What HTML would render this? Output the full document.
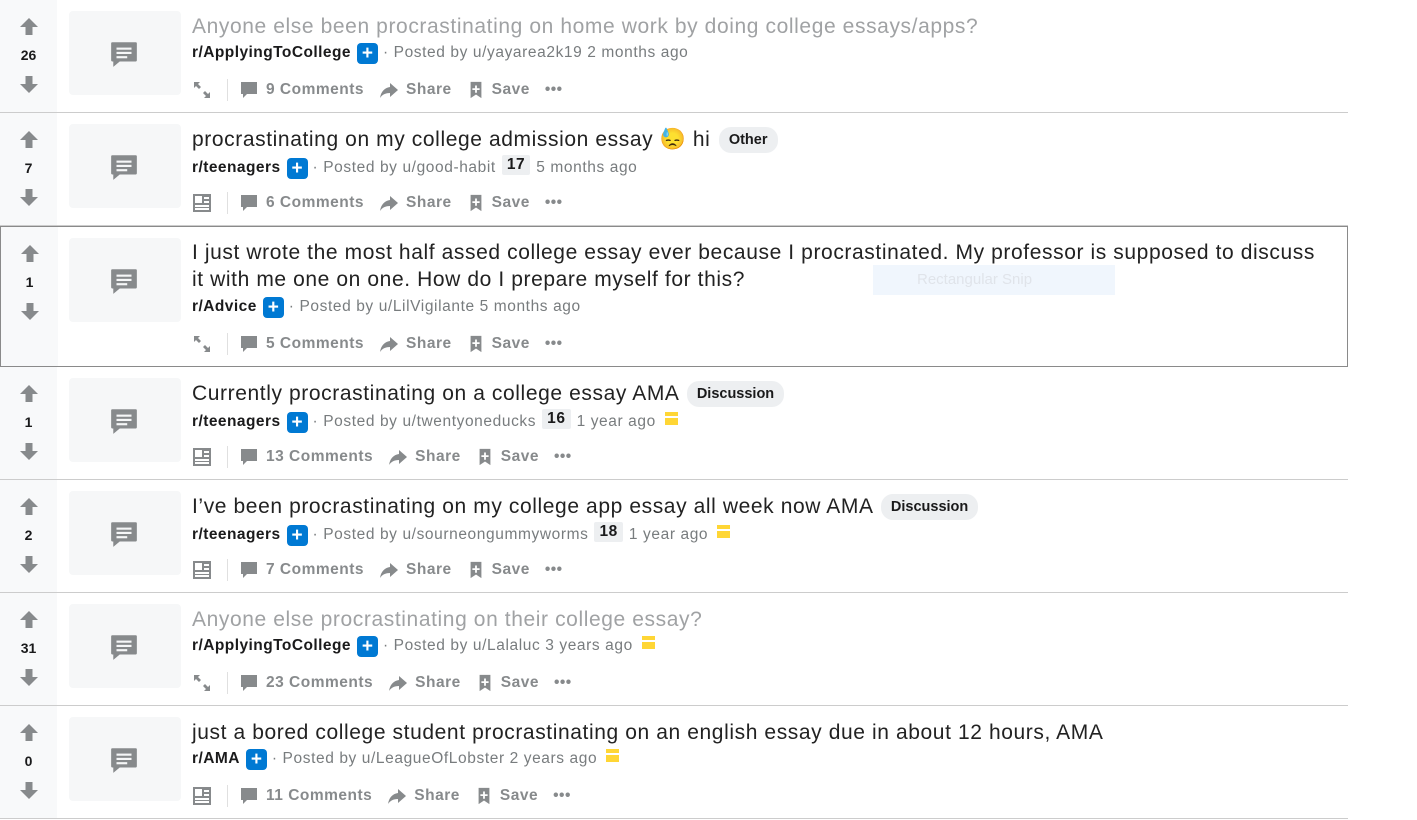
<!DOCTYPE html>
<html><head><meta charset="utf-8">
<style>
*{margin:0;padding:0;box-sizing:border-box}
body{width:1417px;height:820px;background:#fff;font-family:"Liberation Sans",sans-serif;position:relative;overflow:hidden}
.row{position:absolute;left:0;width:1348px;border-bottom:1px solid #ccc;background:#fff}
.row.sel{border:1px solid #8a8a8a}
.vote{position:absolute;left:0;top:0;bottom:0;width:57px;background:#f8f9fa}
.vote svg{position:absolute;left:19px}
.num{position:absolute;left:0;width:57px;text-align:center;font-weight:bold;font-size:14px;color:#1a1a1b}
.thumb{position:absolute;left:69px;width:112px;height:84px;background:#f6f7f8;border-radius:4px}
.thumb svg{position:absolute;left:40px;top:28px}
.title{position:absolute;left:192px;font-size:21px;color:#222;line-height:27px;letter-spacing:0.6px;white-space:nowrap}
.title.v{color:#a0a2a4}
.flair{display:inline-block;background:#edeff1;border-radius:12px;font-size:14.5px;font-weight:bold;color:#1a1a1b;padding:0 10px;line-height:26px;vertical-align:2px;margin-left:2px;letter-spacing:0}
.meta{position:absolute;left:192px;font-size:15.5px;letter-spacing:0.6px;color:#787c7e;white-space:nowrap;display:flex;align-items:center;height:22px}
.meta b{color:#1a1a1b;font-size:15.5px;letter-spacing:0.45px}
.plus{display:inline-block;width:21px;height:21px;background:#0079d3;border-radius:4px;color:#fff;font-weight:bold;text-align:center;line-height:21px;font-size:19px;margin:0 5px 0 6px;letter-spacing:0}
.badge{display:inline-block;background:#edeff1;color:#1a1a1b;font-weight:bold;padding:0 5px;margin:0 6px 0 6px;line-height:20px;border-radius:2px;position:relative;top:-3px}
.arch{display:inline-block;width:13px;height:13px;background:#ffd635;margin-left:9px;position:relative;top:-4px;border-top:4px solid #ffd635;box-shadow:inset 0 2px 0 #fff}
.act{position:absolute;left:192px;display:flex;align-items:center;font-size:15.5px;letter-spacing:0.5px;font-weight:bold;color:#878a8c;height:24px;white-space:nowrap}
.act svg{flex:none}
.div{width:1px;height:22px;background:#e0e0e0;margin:0 11px 0 15px}
.a{display:flex;align-items:center;margin-right:15px}
.a svg{margin-right:7px}
</style></head><body>

<svg width="0" height="0" style="position:absolute">
<defs>
<symbol id="up" viewBox="0 0 20 20"><path d="M10 1 L19 10 L13.5 10 L13.5 18 L6.5 18 L6.5 10 L1 10 Z" fill="#878a8c"/></symbol>
<symbol id="dn" viewBox="0 0 20 20"><path d="M10 19 L19 10 L13.5 10 L13.5 2 L6.5 2 L6.5 10 L1 10 Z" fill="#878a8c"/></symbol>
<symbol id="doc" viewBox="0 0 28 28"><path d="M3 3h22a1 1 0 0 1 1 1v16a1 1 0 0 1-1 1H10l-6 5v-5H3a1 1 0 0 1-1-1V4a1 1 0 0 1 1-1z" fill="#878a8c"/><rect x="7" y="8" width="14" height="2" fill="#f6f7f8"/><rect x="7" y="12" width="14" height="2" fill="#f6f7f8"/><rect x="7" y="16" width="10" height="2" fill="#f6f7f8"/></symbol>
<symbol id="exp" viewBox="0 0 20 20"><path d="M2 2h6l-2 2 3 3-2 2-3-3-2 2z M18 18h-6l2-2-3-3 2-2 3 3 2-2z" fill="#878a8c"/></symbol>
<symbol id="lst" viewBox="0 0 20 20"><rect x="1" y="1" width="18" height="18" fill="#878a8c"/><rect x="3" y="3" width="7" height="7" fill="#fff"/><rect x="12" y="4" width="5" height="2" fill="#fff"/><rect x="12" y="8" width="5" height="2" fill="#fff"/><rect x="3" y="12" width="14" height="2" fill="#fff"/><rect x="3" y="15" width="14" height="2" fill="#fff"/></symbol>
<symbol id="cmt" viewBox="0 0 20 20"><path d="M2 2h16v12H8l-4 4v-4H2z" fill="#878a8c"/></symbol>
<symbol id="shr" viewBox="0 0 20 20"><path d="M11 3 L19 10 L11 17 L11 13 C6 13 3 15 1 18 C2 12 5 8 11 7 Z" fill="#878a8c"/></symbol>
<symbol id="sav" viewBox="0 0 20 20"><path d="M4 1h12v18l-6-4-6 4z" fill="#878a8c"/><path d="M9 5h2v3h3v2h-3v3H9v-3H6V8h3z" fill="#fff"/></symbol>
</defs></svg>

<div class="row" style="top:0;height:113px">
 <div class="vote"><svg width="20" height="20" style="top:17px"><use href="#up"/></svg><div class="num" style="top:47px">26</div><svg width="20" height="20" style="top:74px"><use href="#dn"/></svg></div>
 <div class="thumb" style="top:11px"><svg width="30" height="30"><use href="#doc"/></svg></div>
 <div class="title v" style="top:13px">Anyone else been procrastinating on home work by doing college essays/apps?</div>
 <div class="meta" style="top:42px"><b>r/ApplyingToCollege</b><span class="plus">+</span>· Posted by u/yayarea2k19 2 months ago</div>
 <div class="act" style="top:78px"><svg width="20" height="20"><use href="#exp"/></svg><span class="div"></span><span class="a"><svg width="20" height="20"><use href="#cmt"/></svg>9 Comments</span><span class="a"><svg width="20" height="20"><use href="#shr"/></svg>Share</span><span class="a"><svg width="18" height="20"><use href="#sav"/></svg>Save</span><span>•••</span></div>
</div>

<div class="row" style="top:113px;height:113px">
 <div class="vote"><svg width="20" height="20" style="top:17px"><use href="#up"/></svg><div class="num" style="top:47px">7</div><svg width="20" height="20" style="top:74px"><use href="#dn"/></svg></div>
 <div class="thumb" style="top:11px"><svg width="30" height="30"><use href="#doc"/></svg></div>
 <div class="title" style="top:13px">procrastinating on my college admission essay <span style="font-family:'Noto Color Emoji','DejaVu Sans',sans-serif">😓</span> hi <span class="flair">Other</span></div>
 <div class="meta" style="top:44px"><b>r/teenagers</b><span class="plus">+</span>· Posted by u/good-habit<span class="badge">17</span>5 months ago</div>
 <div class="act" style="top:78px"><svg width="20" height="20"><use href="#lst"/></svg><span class="div"></span><span class="a"><svg width="20" height="20"><use href="#cmt"/></svg>6 Comments</span><span class="a"><svg width="20" height="20"><use href="#shr"/></svg>Share</span><span class="a"><svg width="18" height="20"><use href="#sav"/></svg>Save</span><span>•••</span></div>
</div>

<div class="row sel" style="top:226px;height:141px">
 <div class="vote"><svg width="20" height="20" style="top:17px"><use href="#up"/></svg><div class="num" style="top:47px">1</div><svg width="20" height="20" style="top:74px"><use href="#dn"/></svg></div>
 <div class="thumb" style="top:11px;left:68px"><svg width="30" height="30"><use href="#doc"/></svg></div>
 <div class="title" style="top:12px;left:191px;white-space:normal;width:1125px">I just wrote the most half assed college essay ever because I procrastinated. My professor is supposed to discuss it with me one on one. How do I prepare myself for this?</div>
 <div class="meta" style="top:69px;left:191px"><b>r/Advice</b><span class="plus">+</span>· Posted by u/LilVigilante 5 months ago</div>
 <div class="act" style="top:105px;left:191px"><svg width="20" height="20"><use href="#exp"/></svg><span class="div"></span><span class="a"><svg width="20" height="20"><use href="#cmt"/></svg>5 Comments</span><span class="a"><svg width="20" height="20"><use href="#shr"/></svg>Share</span><span class="a"><svg width="18" height="20"><use href="#sav"/></svg>Save</span><span>•••</span></div>
 <div style="position:absolute;left:872px;top:38px;width:242px;height:30px;background:#f0f6fd;font-size:15px;color:#e0e4ea;line-height:30px;padding-left:44px">Rectangular Snip</div>
</div>

<div class="row" style="top:367px;height:113px">
 <div class="vote"><svg width="20" height="20" style="top:17px"><use href="#up"/></svg><div class="num" style="top:47px">1</div><svg width="20" height="20" style="top:74px"><use href="#dn"/></svg></div>
 <div class="thumb" style="top:11px"><svg width="30" height="30"><use href="#doc"/></svg></div>
 <div class="title" style="top:13px">Currently procrastinating on a college essay AMA <span class="flair">Discussion</span></div>
 <div class="meta" style="top:44px"><b>r/teenagers</b><span class="plus">+</span>· Posted by u/twentyoneducks<span class="badge">16</span>1 year ago<span class="arch"></span></div>
 <div class="act" style="top:78px"><svg width="20" height="20"><use href="#lst"/></svg><span class="div"></span><span class="a"><svg width="20" height="20"><use href="#cmt"/></svg>13 Comments</span><span class="a"><svg width="20" height="20"><use href="#shr"/></svg>Share</span><span class="a"><svg width="18" height="20"><use href="#sav"/></svg>Save</span><span>•••</span></div>
</div>

<div class="row" style="top:480px;height:113px">
 <div class="vote"><svg width="20" height="20" style="top:17px"><use href="#up"/></svg><div class="num" style="top:47px">2</div><svg width="20" height="20" style="top:74px"><use href="#dn"/></svg></div>
 <div class="thumb" style="top:11px"><svg width="30" height="30"><use href="#doc"/></svg></div>
 <div class="title" style="top:13px">I’ve been procrastinating on my college app essay all week now AMA <span class="flair">Discussion</span></div>
 <div class="meta" style="top:44px"><b>r/teenagers</b><span class="plus">+</span>· Posted by u/sourneongummyworms<span class="badge">18</span>1 year ago<span class="arch"></span></div>
 <div class="act" style="top:78px"><svg width="20" height="20"><use href="#lst"/></svg><span class="div"></span><span class="a"><svg width="20" height="20"><use href="#cmt"/></svg>7 Comments</span><span class="a"><svg width="20" height="20"><use href="#shr"/></svg>Share</span><span class="a"><svg width="18" height="20"><use href="#sav"/></svg>Save</span><span>•••</span></div>
</div>

<div class="row" style="top:593px;height:113px">
 <div class="vote"><svg width="20" height="20" style="top:17px"><use href="#up"/></svg><div class="num" style="top:47px">31</div><svg width="20" height="20" style="top:74px"><use href="#dn"/></svg></div>
 <div class="thumb" style="top:11px"><svg width="30" height="30"><use href="#doc"/></svg></div>
 <div class="title v" style="top:13px">Anyone else procrastinating on their college essay?</div>
 <div class="meta" style="top:42px"><b>r/ApplyingToCollege</b><span class="plus">+</span>· Posted by u/Lalaluc 3 years ago<span class="arch"></span></div>
 <div class="act" style="top:78px"><svg width="20" height="20"><use href="#exp"/></svg><span class="div"></span><span class="a"><svg width="20" height="20"><use href="#cmt"/></svg>23 Comments</span><span class="a"><svg width="20" height="20"><use href="#shr"/></svg>Share</span><span class="a"><svg width="18" height="20"><use href="#sav"/></svg>Save</span><span>•••</span></div>
</div>

<div class="row" style="top:706px;height:113px">
 <div class="vote"><svg width="20" height="20" style="top:17px"><use href="#up"/></svg><div class="num" style="top:47px">0</div><svg width="20" height="20" style="top:74px"><use href="#dn"/></svg></div>
 <div class="thumb" style="top:11px"><svg width="30" height="30"><use href="#doc"/></svg></div>
 <div class="title" style="top:13px">just a bored college student procrastinating on an english essay due in about 12 hours, AMA</div>
 <div class="meta" style="top:42px"><b>r/AMA</b><span class="plus">+</span>· Posted by u/LeagueOfLobster 2 years ago<span class="arch"></span></div>
 <div class="act" style="top:78px"><svg width="20" height="20"><use href="#lst"/></svg><span class="div"></span><span class="a"><svg width="20" height="20"><use href="#cmt"/></svg>11 Comments</span><span class="a"><svg width="20" height="20"><use href="#shr"/></svg>Share</span><span class="a"><svg width="18" height="20"><use href="#sav"/></svg>Save</span><span>•••</span></div>
</div>

</body></html>
